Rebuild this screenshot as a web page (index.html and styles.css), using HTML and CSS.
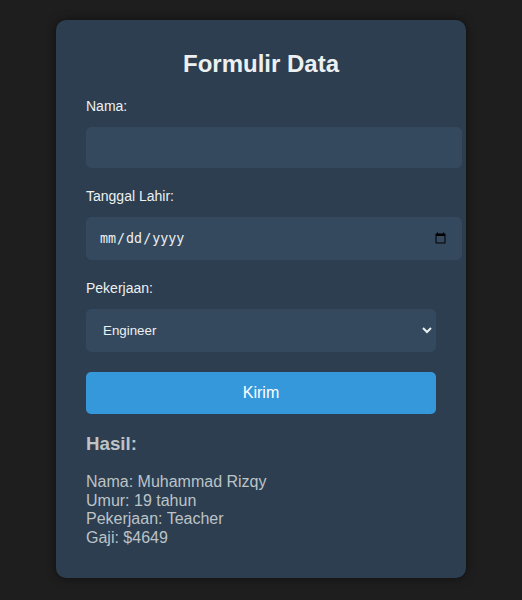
FILE: index.html
```html
<!DOCTYPE html>
<html lang="id">
<head>
<meta charset="utf-8">
<title>Formulir Data</title>
<link rel="stylesheet" href="styles.css">
</head>
<body>
  <div class="card">
    <h2 class="title">Formulir Data</h2>
    <form class="form">
      <label class="label" for="nama">Nama:</label>
      <input class="field text" type="text" id="nama">
      <label class="label" for="tgl">Tanggal Lahir:</label>
      <input class="field date" type="date" id="tgl">
      <label class="label" for="kerja">Pekerjaan:</label>
      <select class="select" id="kerja">
        <option>Engineer</option>
        <option>Teacher</option>
        <option>Doctor</option>
      </select>
      <button class="btn" type="button">Kirim</button>
    </form>
    <div class="result">
      <h3 class="result-title">Hasil:</h3>
      <div class="result-body">
        Nama: Muhammad Rizqy<br>
        Umur: 19 tahun<br>
        Pekerjaan: Teacher<br>
        Gaji: $4649
      </div>
    </div>
  </div>
</body>
</html>
```
FILE: styles.css
```css
html, body {
  margin: 0;
  background: #1e1e1e;
}
body {
  padding: 20px 0 23px;
  font-family: "Liberation Sans", Arial, sans-serif;
  color: #ecf0f1;
}
.card {
  width: 410px;
  box-sizing: border-box;
  margin: 0 auto;
  padding: 30px 30px 31px;
  background: #2c3e50;
  border-radius: 10px;
  box-shadow: 0 0 10px rgba(0, 0, 0, 0.5);
}
.title {
  margin: 0 0 20px;
  font-size: 24px;
  font-weight: bold;
  text-align: center;
  color: #ecf0f1;
}
.form {
  display: flex;
  flex-direction: column;
  align-items: flex-start;
}
.label {
  display: block;
  font-size: 14px;
  line-height: 16px;
  margin-bottom: 13px;
  color: #ecf0f1;
}
.field {
  width: 100%;
  padding: 12px;
  border: 1px solid #34495e;
  border-radius: 5px;
  background: #34495e;
  color: #ecf0f1;
  margin: 0 0 20px;
  outline: none;
}
.text {
  height: 15px;
  font: 13.333px "Liberation Sans", Arial, sans-serif;
}
.date {
  height: 17px;
  font: 13.333px "DejaVu Sans Mono", monospace;
}
.select {
  width: 100%;
  height: 43px;
  padding: 12px;
  border: 1px solid #34495e;
  border-radius: 5px;
  background: #34495e;
  color: #ecf0f1;
  margin: 0 0 20px;
  font: 13.333px "Liberation Sans", Arial, sans-serif;
  outline: none;
}
.btn {
  width: 100%;
  height: 42px;
  padding: 12px;
  border: none;
  border-radius: 5px;
  background: #3498db;
  color: #ffffff;
  font: 16px "Liberation Sans", Arial, sans-serif;
  cursor: pointer;
}
.result {
  color: #bdc3c7;
}
.result-title {
  font-size: 18.72px;
  margin: 18.72px 0;
  font-weight: bold;
}
.result-body {
  font-size: 16px;
  line-height: 18.4px;
}
```
